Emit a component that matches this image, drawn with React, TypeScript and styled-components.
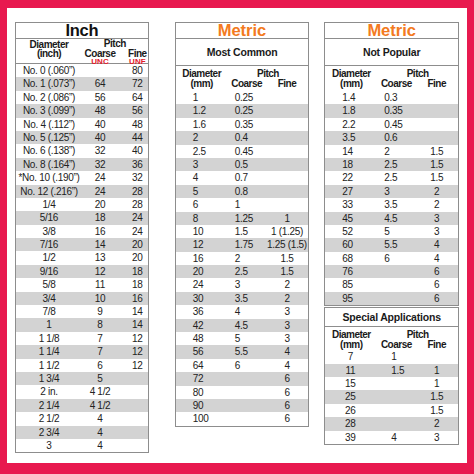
import styled, { createGlobalStyle } from 'styled-components'

const GlobalStyle = createGlobalStyle`
  html, body {
    margin: 0;
    padding: 0;
  }
  body {
    font-family: "Liberation Sans", Arial, sans-serif;
    color: #1a1a1a;
  }
`

type Row = [string, string, string]

const inchRows: Row[] = [
  ['No. 0 (.060”)', '', '80'],
  ['No. 1 (.073”)', '64', '72'],
  ['No. 2 (.086”)', '56', '64'],
  ['No. 3 (.099”)', '48', '56'],
  ['No. 4 (.112”)', '40', '48'],
  ['No. 5 (.125”)', '40', '44'],
  ['No. 6 (.138”)', '32', '40'],
  ['No. 8 (.164”)', '32', '36'],
  ['*No. 10 (.190”)', '24', '32'],
  ['No. 12 (.216”)', '24', '28'],
  ['1/4', '20', '28'],
  ['5/16', '18', '24'],
  ['3/8', '16', '24'],
  ['7/16', '14', '20'],
  ['1/2', '13', '20'],
  ['9/16', '12', '18'],
  ['5/8', '11', '18'],
  ['3/4', '10', '16'],
  ['7/8', '9', '14'],
  ['1', '8', '14'],
  ['1 1/8', '7', '12'],
  ['1 1/4', '7', '12'],
  ['1 1/2', '6', '12'],
  ['1 3/4', '5', ''],
  ['2 in.', '4 1/2', ''],
  ['2 1/4', '4 1/2', ''],
  ['2 1/2', '4', ''],
  ['2 3/4', '4', ''],
  ['3', '4', ''],
]

const commonRows: Row[] = [
  ['1', '0.25', ''],
  ['1.2', '0.25', ''],
  ['1.6', '0.35', ''],
  ['2', '0.4', ''],
  ['2.5', '0.45', ''],
  ['3', '0.5', ''],
  ['4', '0.7', ''],
  ['5', '0.8', ''],
  ['6', '1', ''],
  ['8', '1.25', '1'],
  ['10', '1.5', '1 (1.25)'],
  ['12', '1.75', '1.25 (1.5)'],
  ['16', '2', '1.5'],
  ['20', '2.5', '1.5'],
  ['24', '3', '2'],
  ['30', '3.5', '2'],
  ['36', '4', '3'],
  ['42', '4.5', '3'],
  ['48', '5', '3'],
  ['56', '5.5', '4'],
  ['64', '6', '4'],
  ['72', '', '6'],
  ['80', '', '6'],
  ['90', '', '6'],
  ['100', '', '6'],
]

const rareRows: Row[] = [
  ['1.4', '0.3', ''],
  ['1.8', '0.35', ''],
  ['2.2', '0.45', ''],
  ['3.5', '0.6', ''],
  ['14', '2', '1.5'],
  ['18', '2.5', '1.5'],
  ['22', '2.5', '1.5'],
  ['27', '3', '2'],
  ['33', '3.5', '2'],
  ['45', '4.5', '3'],
  ['52', '5', '3'],
  ['60', '5.5', '4'],
  ['68', '6', '4'],
  ['76', '', '6'],
  ['85', '', '6'],
  ['95', '', '6'],
]

const specialRows: Row[] = [
  ['7', '1', ''],
  ['11', '1.5', '1'],
  ['15', '', '1'],
  ['25', '', '1.5'],
  ['26', '', '1.5'],
  ['28', '', '2'],
  ['39', '4', '3'],
]

const INCH_COLS = '66px 36px 1fr'
const METRIC_COLS = '52px 38px 1fr'

const App = () => {
  return (
    <>
      <GlobalStyle />
      <Frame>
        <Panel>
          <Column $width={134}>
            <Table>
              <Title>Inch</Title>
              <InchHeader>
                <HeadStack $lh={9}>
                  Diameter
                  <br />
                  (inch)
                </HeadStack>
                <PitchBlock>
                  <PitchLabel $lh={8.5}>Pitch</PitchLabel>
                  <SubHeads $cols="36px 1fr">
                    <HeadStack $lh={9}>
                      Coarse
                      <Thread>UNC</Thread>
                    </HeadStack>
                    <HeadStack $lh={9} $pad="0 0 0 9px">
                      Fine
                      <Thread>UNF</Thread>
                    </HeadStack>
                  </SubHeads>
                </PitchBlock>
              </InchHeader>
              {inchRows.map((r, i) => (
                <DataRow key={r[0]} $cols={INCH_COLS} $shade={i % 2 === 1}>
                  <Cell>{r[0]}</Cell>
                  <Cell>{r[1]}</Cell>
                  <Cell $pad="0 0 0 9px">{r[2]}</Cell>
                </DataRow>
              ))}
            </Table>
          </Column>

          <Column $width={135} $gap={26}>
            <MetricTable title="Most Common" rows={commonRows} />
          </Column>

          <Column $width={135} $gap={15}>
            <MetricTable title="Not Popular" rows={rareRows} />
            <Spacer />
            <Table>
              <Section $h={18}>Special Applications</Section>
              <MetricHeaderBlock $h={23} />
              {specialRows.map((r, i) => (
                <DataRow key={r[0]} $cols={METRIC_COLS} $shade={i % 2 === 1}>
                  <Cell $pad="0 2px 0 0">{r[0]}</Cell>
                  <Cell $align="left" $pad="0 0 0 14px">
                    {r[1]}
                  </Cell>
                  <Cell>{r[2]}</Cell>
                </DataRow>
              ))}
            </Table>
          </Column>
        </Panel>
      </Frame>
    </>
  )
}

export default App

const MetricTable = ({ title, rows }: { title: string; rows: Row[] }) => (
  <Table>
    <Title $orange>Metric</Title>
    <Section $h={26}>{title}</Section>
    <MetricHeaderBlock $h={25} />
    {rows.map((r, i) => (
      <DataRow key={r[0]} $cols={METRIC_COLS} $shade={i % 2 === 1}>
        <Cell $align="left" $pad="0 0 0 17px">
          {r[0]}
        </Cell>
        <Cell $align="left" $pad="0 0 0 7px">
          {r[1]}
        </Cell>
        <Cell>{r[2]}</Cell>
      </DataRow>
    ))}
  </Table>
)

const MetricHeaderBlock = ({ $h }: { $h: number }) => (
  <MetricHeader $h={$h}>
    <HeadStack $lh={10}>
      Diameter
      <br />
      (mm)
    </HeadStack>
    <PitchBlock>
      <PitchLabel $lh={10}>Pitch</PitchLabel>
      <SubHeads $cols="38px 1fr">
        <HeadStack $lh={10}>Coarse</HeadStack>
        <HeadStack $lh={10}>Fine</HeadStack>
      </SubHeads>
    </PitchBlock>
  </MetricHeader>
)

const Frame = styled.div`
  width: 474px;
  height: 474px;
  box-sizing: border-box;
  padding: 8px 7px 11px 7px;
  background: #e8194f;
`

const Panel = styled.div`
  height: 100%;
  box-sizing: border-box;
  background: #ffffff;
  padding: 14px 8px 0 8px;
  display: flex;
  align-items: flex-start;
`

const Column = styled.div<{ $width: number; $gap?: number }>`
  width: ${(p) => p.$width}px;
  margin-left: ${(p) => p.$gap ?? 0}px;
  display: flex;
  flex-direction: column;
`

const Spacer = styled.div`
  height: 1px;
`

const Table = styled.div`
  border: 1px solid #8d8d8d;
  background: #ffffff;
`

const Title = styled.div<{ $orange?: boolean }>`
  height: 15px;
  line-height: 15px;
  text-align: center;
  font-size: 16.5px;
  font-weight: 700;
  letter-spacing: ${(p) => (p.$orange ? '0' : '-0.3px')};
  color: ${(p) => (p.$orange ? '#f37a21' : '#111111')};
  border-bottom: 1px solid #8d8d8d;
`

const Section = styled.div<{ $h: number }>`
  height: ${(p) => p.$h}px;
  line-height: ${(p) => p.$h}px;
  text-align: center;
  font-size: 10.5px;
  font-weight: 700;
  letter-spacing: -0.2px;
  border-bottom: 1px solid #8d8d8d;
`

const InchHeader = styled.div`
  height: 25px;
  display: grid;
  grid-template-columns: 66px 1fr;
  align-items: start;
  border-bottom: 1px solid #8d8d8d;
  box-sizing: border-box;
  padding-top: 1px;
`

const MetricHeader = styled.div<{ $h: number }>`
  height: ${(p) => p.$h}px;
  display: grid;
  grid-template-columns: 52px 1fr;
  align-items: start;
  box-sizing: border-box;
  padding-top: 3px;
`

const PitchBlock = styled.div`
  display: flex;
  flex-direction: column;
`

const PitchLabel = styled.div<{ $lh: number }>`
  text-align: center;
  font-size: 10px;
  font-weight: 700;
  letter-spacing: -0.5px;
  line-height: ${(p) => p.$lh}px;
`

const SubHeads = styled.div<{ $cols: string }>`
  display: grid;
  grid-template-columns: ${(p) => p.$cols};
`

const HeadStack = styled.div<{ $lh: number; $pad?: string }>`
  text-align: center;
  font-size: 10px;
  font-weight: 700;
  letter-spacing: -0.5px;
  line-height: ${(p) => p.$lh}px;
  padding: ${(p) => p.$pad ?? '0'};
  white-space: nowrap;
`

const Thread = styled.div`
  color: #e3202b;
  font-size: 8px;
  line-height: 8px;
  letter-spacing: 0;
`

const DataRow = styled.div<{ $cols: string; $shade: boolean }>`
  height: 13.4px;
  display: grid;
  grid-template-columns: ${(p) => p.$cols};
  align-items: center;
  background: ${(p) => (p.$shade ? '#d3d3d3' : '#ffffff')};
`

const Cell = styled.div<{ $align?: 'left' | 'center'; $pad?: string }>`
  text-align: ${(p) => p.$align ?? 'center'};
  padding: ${(p) => p.$pad ?? '0'};
  font-size: 10px;
  line-height: 13.4px;
  letter-spacing: -0.3px;
  color: #222222;
  white-space: nowrap;
`
